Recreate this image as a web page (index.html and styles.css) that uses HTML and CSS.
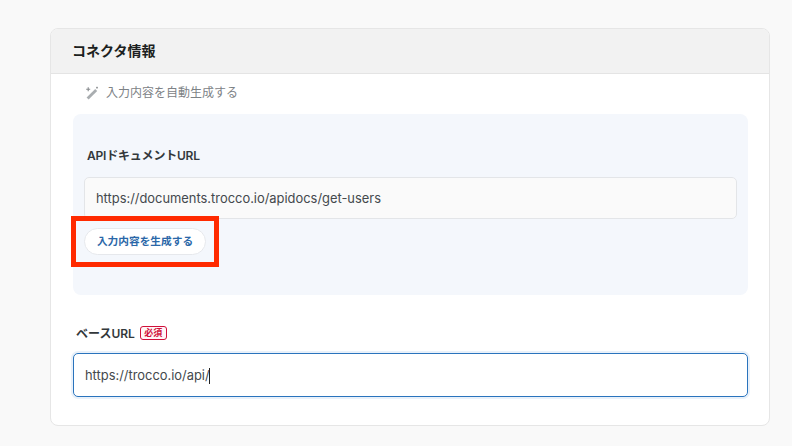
FILE: index.html
```html
<!DOCTYPE html>
<html lang="ja">
<head>
<meta charset="utf-8">
<title>コネクタ情報</title>
<link rel="stylesheet" href="styles.css">
</head>
<body>
<section class="card">
  <header class="card-header"><h2 class="card-title">コネクタ情報</h2></header>
  <div class="card-body">
    <div class="auto-toggle">
      <svg class="wand" viewBox="0 0 14 14" width="14" height="14" aria-hidden="true">
        <path class="wand-body" d="M1.6 11.6 10.2 3l2 2-8.6 8.6z"/>
        <path class="wand-line" d="M3.2 1.2v4M1.2 3.2h4M12 .8v1.8M11.1 1.7h1.8"/>
      </svg>
      <span>入力内容を自動生成する</span>
    </div>
    <div class="panel">
      <label class="panel-label">APIドキュメントURL</label>
      <div class="field doc-field">https://documents.trocco.io/apidocs/get-users</div>
      <button class="generate" type="button">入力内容を生成する</button>
      <div class="highlight"></div>
    </div>
    <div class="base-label">
      <span>ベースURL</span><span class="required">必須</span>
    </div>
    <div class="field base-field">https://trocco.io/api/<span class="caret"></span></div>
  </div>
</section>
</body>
</html>
```
FILE: styles.css
```css
* { box-sizing: border-box; }
html, body { margin: 0; height: 446px; overflow: hidden; }
body {
  background: #f9f9f9;
  padding: 28px 22px 0 50px;
  font-family: Inter, "Noto Sans CJK JP", "Liberation Sans", sans-serif;
  color: #3d4347;
}
.card {
  height: 398px;
  background: #fff;
  border: 1px solid #e6e6e6;
  border-radius: 8px;
  overflow: hidden;
}
.card-header {
  height: 45px;
  background: #f2f2f2;
  border-bottom: 1px solid #e4e4e4;
  padding: 0 0 2px 21px;
  display: flex;
  align-items: center;
}
.card-title { margin: 0; font-size: 14px; font-weight: 700; color: #1c1f21; }
.card-body { padding: 0 21px 0 22px; }
.auto-toggle {
  height: 40px;
  padding: 0 0 6px 12px;
  display: flex;
  align-items: center;
  gap: 7px;
  font-size: 12px;
  color: #7d8286;
}
.wand { flex: none; margin-top: 3px; }
.wand-body { fill: #a9adb0; }
.wand-line { fill: none; stroke: #85898c; stroke-width: 1.1; }
.panel {
  position: relative;
  height: 181px;
  background: #f4f7fc;
  border-radius: 8px;
  padding: 33px 11px 0;
}
.panel-label {
  display: block;
  height: 30px;
  padding-left: 3px;
  font-size: 12px;
  line-height: 18px;
  font-weight: 600;
  color: #33383b;
  letter-spacing: -0.2px;
}
.field {
  display: flex;
  align-items: center;
  font-size: 12.9px;
  line-height: 18px;
  color: #44494d;
  border-radius: 5px;
}
.doc-field {
  height: 42px;
  padding: 1px 0 0 11px;
  background: #fafafa;
  border: 1px solid #e3e5e8;
}
.generate {
  display: block;
  width: 122px;
  height: 27px;
  margin-top: 9px;
  padding: 0 0 2px;
  background: #fff;
  border: 1px solid #e6e8ec;
  border-radius: 14px;
  font: 700 10.7px Inter, "Noto Sans CJK JP", sans-serif;
  color: #2a67a8;
}
.highlight {
  position: absolute;
  left: -2px;
  top: 102px;
  width: 148px;
  height: 51px;
  border: 5px solid #ff2a00;
}
.base-label {
  display: flex;
  align-items: center;
  gap: 4px;
  height: 20px;
  margin-top: 28px;
  padding: 0 0 1px 3px;
  font-size: 12px;
  font-weight: 600;
  color: #33383b;
}
.required {
  height: 14px;
  width: 27px;
  margin-top: 1px;
  margin-left: 1px;
  text-align: center;
  border: 1px solid #d0103a;
  border-radius: 3px;
  background: #fff5f7;
  font-size: 9px;
  line-height: 12px;
  font-weight: 700;
  color: #d0103a;
}
.base-field {
  height: 44px;
  margin-top: 10px;
  padding: 2px 0 0 11px;
  background: #fff;
  border: 1px solid #2a74bd;
  box-shadow: 0 0 0 2px #e9f1fa;
}
.caret {
  width: 1px;
  height: 16px;
  margin-left: -1px;
  background: #222;
}
```
